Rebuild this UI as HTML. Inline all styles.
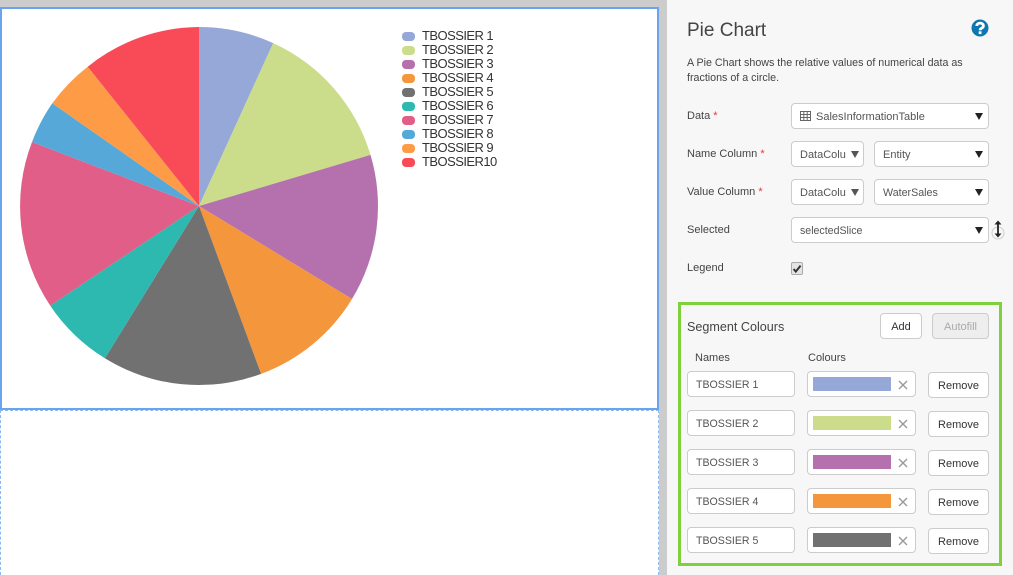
<!DOCTYPE html>
<html>
<head>
<meta charset="utf-8">
<style>
html,body{margin:0;padding:0;width:1013px;height:575px;overflow:hidden;background:#fff;font-family:"Liberation Sans",sans-serif}
div,span{position:absolute;box-sizing:border-box;white-space:nowrap}
.lab{font-size:11px;color:#444;line-height:14px}
.lab i{position:static;font-style:normal;color:#e33;margin-left:0}
.box{background:#fff;border:1px solid #ccc;border-radius:4px}
.t{font-size:11px;line-height:14px;color:#555}
.arr{width:0;height:0;border-left:4px solid transparent;border-right:4px solid transparent;border-top:7px solid #222}
.btn{background:#fff;border:1px solid #ccc;border-radius:4px;font-size:11px;color:#333;text-align:center}
.lg{font-size:13px;letter-spacing:-.55px;line-height:14px;color:#333;left:422px}
.sw{left:402px;width:13px;height:9px;border-radius:4px}
</style>
</head>
<body>
<div style="left:0;top:0;width:1013px;height:7px;background:#ccc"></div>
<div style="left:659px;top:0;width:8px;height:575px;background:#ccc"></div>
<div style="left:667px;top:0;width:346px;height:575px;background:#f7f7f7"></div>

<div style="left:0;top:7px;width:659px;height:403px;border:2px solid #6aa3ee;background:#fff"></div>
<div style="left:0;top:410px;width:659px;height:165px;border-left:1px dashed #8db8f0;border-right:1px dashed #8db8f0;border-top:1px dashed #8db8f0"></div>

<svg style="position:absolute;left:0;top:0" width="660" height="410" viewBox="0 0 660 410">
<path d="M199 206 L199 27 A179 179 0 0 1 273.2 43.1Z" fill="#95a8d8"/>
<path d="M199 206 L273.2 43.1 A179 179 0 0 1 370.5 154.9Z" fill="#cbdd8b"/>
<path d="M199 206 L370.5 154.9 A179 179 0 0 1 352 299Z" fill="#b571ad"/>
<path d="M199 206 L352 299 A179 179 0 0 1 261.1 373.9Z" fill="#f4963b"/>
<path d="M199 206 L261.1 373.9 A179 179 0 0 1 104.9 358.3Z" fill="#717171"/>
<path d="M199 206 L104.9 358.3 A179 179 0 0 1 50.2 305.6Z" fill="#2db9b0"/>
<path d="M199 206 L50.2 305.6 A179 179 0 0 1 32 142Z" fill="#e05e88"/>
<path d="M199 206 L32 142 A179 179 0 0 1 52.3 103.3Z" fill="#56a8d8"/>
<path d="M199 206 L52.3 103.3 A179 179 0 0 1 87.7 66.7Z" fill="#fe9b47"/>
<path d="M199 206 L87.7 66.7 A179 179 0 0 1 199 27Z" fill="#f94a58"/>
</svg>

<div class="sw" style="top:32px;background:#95a8d8"></div><div class="lg" style="top:29px">TBOSSIER 1</div>
<div class="sw" style="top:46px;background:#cbdd8b"></div><div class="lg" style="top:43px">TBOSSIER 2</div>
<div class="sw" style="top:60px;background:#b571ad"></div><div class="lg" style="top:57px">TBOSSIER 3</div>
<div class="sw" style="top:74px;background:#f4963b"></div><div class="lg" style="top:71px">TBOSSIER 4</div>
<div class="sw" style="top:88px;background:#717171"></div><div class="lg" style="top:85px">TBOSSIER 5</div>
<div class="sw" style="top:102px;background:#2db9b0"></div><div class="lg" style="top:99px">TBOSSIER 6</div>
<div class="sw" style="top:116px;background:#e05e88"></div><div class="lg" style="top:113px">TBOSSIER 7</div>
<div class="sw" style="top:130px;background:#56a8d8"></div><div class="lg" style="top:127px">TBOSSIER 8</div>
<div class="sw" style="top:144px;background:#fe9b47"></div><div class="lg" style="top:141px">TBOSSIER 9</div>
<div class="sw" style="top:158px;background:#f94a58"></div><div class="lg" style="top:155px">TBOSSIER10</div>

<div style="left:687px;top:19px;font-size:19px;line-height:24px;color:#444">Pie Chart</div>
<svg style="position:absolute;left:971px;top:19px" width="18" height="18" viewBox="0 0 18 18">
<circle cx="9" cy="9" r="8.5" fill="#0f77b0"/>
<path d="M5.8 7 C5.8 3.2 12.4 3.2 12.4 7 C12.4 9.3 9.1 8.8 9.1 11.2" fill="none" stroke="#fff" stroke-width="2.8"/>
<rect x="7.7" y="12.3" width="2.8" height="2.8" fill="#fff"/>
</svg>
<div class="lab" style="left:687px;top:56px;line-height:15px;color:#444;font-size:10.7px">A Pie Chart shows the relative values of numerical data as<br>fractions of a circle.</div>

<div class="lab" style="left:687px;top:109px">Data <i>*</i></div>
<div class="lab" style="left:687px;top:147px">Name Column <i>*</i></div>
<div class="lab" style="left:687px;top:185px">Value Column <i>*</i></div>
<div class="lab" style="left:687px;top:223px">Selected</div>
<div class="lab" style="left:687px;top:261px">Legend</div>

<div class="box" style="left:791px;top:103px;width:198px;height:26px"></div>
<svg style="position:absolute;left:800px;top:111px" width="11" height="10" viewBox="0 0 11 10"><path d="M.5 .5H10.5V9.5H.5ZM.5 3.5H10.5M.5 6.5H10.5M3.8 .5V9.5M7.2 .5V9.5" fill="none" stroke="#666" stroke-width="1"/></svg>
<div class="t" style="left:816px;top:110px">SalesInformationTable</div>
<div class="arr" style="left:975px;top:113px"></div>

<div class="box" style="left:791px;top:141px;width:73px;height:26px"></div>
<div class="t" style="left:800px;top:148px">DataColu</div>
<div class="arr" style="left:851px;top:151px;border-top-color:#555"></div>
<div class="box" style="left:874px;top:141px;width:115px;height:26px"></div>
<div class="t" style="left:883px;top:148px">Entity</div>
<div class="arr" style="left:975px;top:151px"></div>

<div class="box" style="left:791px;top:179px;width:73px;height:26px"></div>
<div class="t" style="left:800px;top:186px">DataColu</div>
<div class="arr" style="left:851px;top:189px;border-top-color:#555"></div>
<div class="box" style="left:874px;top:179px;width:115px;height:26px"></div>
<div class="t" style="left:883px;top:186px;font-size:10.7px">WaterSales</div>
<div class="arr" style="left:975px;top:189px"></div>

<div class="box" style="left:791px;top:217px;width:198px;height:26px"></div>
<div class="t" style="left:800px;top:224px;font-size:10.6px">selectedSlice</div>
<div class="arr" style="left:975px;top:227px"></div>
<svg style="position:absolute;left:990px;top:219px" width="16" height="22" viewBox="0 0 16 22">
<circle cx="8" cy="14" r="6" fill="#f7f7f7" stroke="#ccc"/>
<path d="M8 3V16" stroke="#222" stroke-width="1.8"/>
<path d="M4.5 5.5L8 1.5L11.5 5.5ZM4.5 14.5L8 18.5L11.5 14.5Z" fill="#222"/>
</svg>

<div style="left:791px;top:262px;width:12px;height:13px;border:1px solid #aaa;border-radius:2px;background:#e4e4e4"></div>
<svg style="position:absolute;left:791px;top:262px" width="12" height="13" viewBox="0 0 12 13"><path d="M2.6 7L4.8 9.6L9.6 3.6" fill="none" stroke="#333" stroke-width="2"/></svg>

<div style="left:678px;top:302px;width:324px;height:264px;border:3px solid #7ed03c"></div>
<div style="left:687px;top:319px;font-size:12.6px;line-height:16px;color:#444">Segment Colours</div>
<div class="btn" style="left:880px;top:313px;width:42px;height:26px;line-height:26px;color:#333">Add</div>
<div class="btn" style="left:932px;top:313px;width:57px;height:26px;line-height:26px;background:#eee;color:#aaa">Autofill</div>
<div class="lab" style="left:695px;top:351px">Names</div>
<div class="lab" style="left:808px;top:351px">Colours</div>

<div class="box" style="left:687px;top:371px;width:108px;height:26px"></div>
<div class="t" style="left:696px;top:378px;font-size:10.6px">TBOSSIER 1</div>
<div class="box" style="left:807px;top:371px;width:109px;height:26px"></div>
<div style="left:813px;top:377px;width:78px;height:14px;background:#95a8d8"></div>
<svg style="position:absolute;left:898px;top:380px" width="10" height="10" viewBox="0 0 10 10"><path d="M1 1L9 9M9 1L1 9" stroke="#999" stroke-width="1.4"/></svg>
<div class="btn" style="left:928px;top:372px;width:61px;height:26px;line-height:26px">Remove</div>

<div class="box" style="left:687px;top:410px;width:108px;height:26px"></div>
<div class="t" style="left:696px;top:417px;font-size:10.6px">TBOSSIER 2</div>
<div class="box" style="left:807px;top:410px;width:109px;height:26px"></div>
<div style="left:813px;top:416px;width:78px;height:14px;background:#cbdd8b"></div>
<svg style="position:absolute;left:898px;top:419px" width="10" height="10" viewBox="0 0 10 10"><path d="M1 1L9 9M9 1L1 9" stroke="#999" stroke-width="1.4"/></svg>
<div class="btn" style="left:928px;top:411px;width:61px;height:26px;line-height:26px">Remove</div>

<div class="box" style="left:687px;top:449px;width:108px;height:26px"></div>
<div class="t" style="left:696px;top:456px;font-size:10.6px">TBOSSIER 3</div>
<div class="box" style="left:807px;top:449px;width:109px;height:26px"></div>
<div style="left:813px;top:455px;width:78px;height:14px;background:#b571ad"></div>
<svg style="position:absolute;left:898px;top:458px" width="10" height="10" viewBox="0 0 10 10"><path d="M1 1L9 9M9 1L1 9" stroke="#999" stroke-width="1.4"/></svg>
<div class="btn" style="left:928px;top:450px;width:61px;height:26px;line-height:26px">Remove</div>

<div class="box" style="left:687px;top:488px;width:108px;height:26px"></div>
<div class="t" style="left:696px;top:495px;font-size:10.6px">TBOSSIER 4</div>
<div class="box" style="left:807px;top:488px;width:109px;height:26px"></div>
<div style="left:813px;top:494px;width:78px;height:14px;background:#f4963b"></div>
<svg style="position:absolute;left:898px;top:497px" width="10" height="10" viewBox="0 0 10 10"><path d="M1 1L9 9M9 1L1 9" stroke="#999" stroke-width="1.4"/></svg>
<div class="btn" style="left:928px;top:489px;width:61px;height:26px;line-height:26px">Remove</div>

<div class="box" style="left:687px;top:527px;width:108px;height:26px"></div>
<div class="t" style="left:696px;top:534px;font-size:10.6px">TBOSSIER 5</div>
<div class="box" style="left:807px;top:527px;width:109px;height:26px"></div>
<div style="left:813px;top:533px;width:78px;height:14px;background:#717171"></div>
<svg style="position:absolute;left:898px;top:536px" width="10" height="10" viewBox="0 0 10 10"><path d="M1 1L9 9M9 1L1 9" stroke="#999" stroke-width="1.4"/></svg>
<div class="btn" style="left:928px;top:528px;width:61px;height:26px;line-height:26px">Remove</div>
</body>
</html>
